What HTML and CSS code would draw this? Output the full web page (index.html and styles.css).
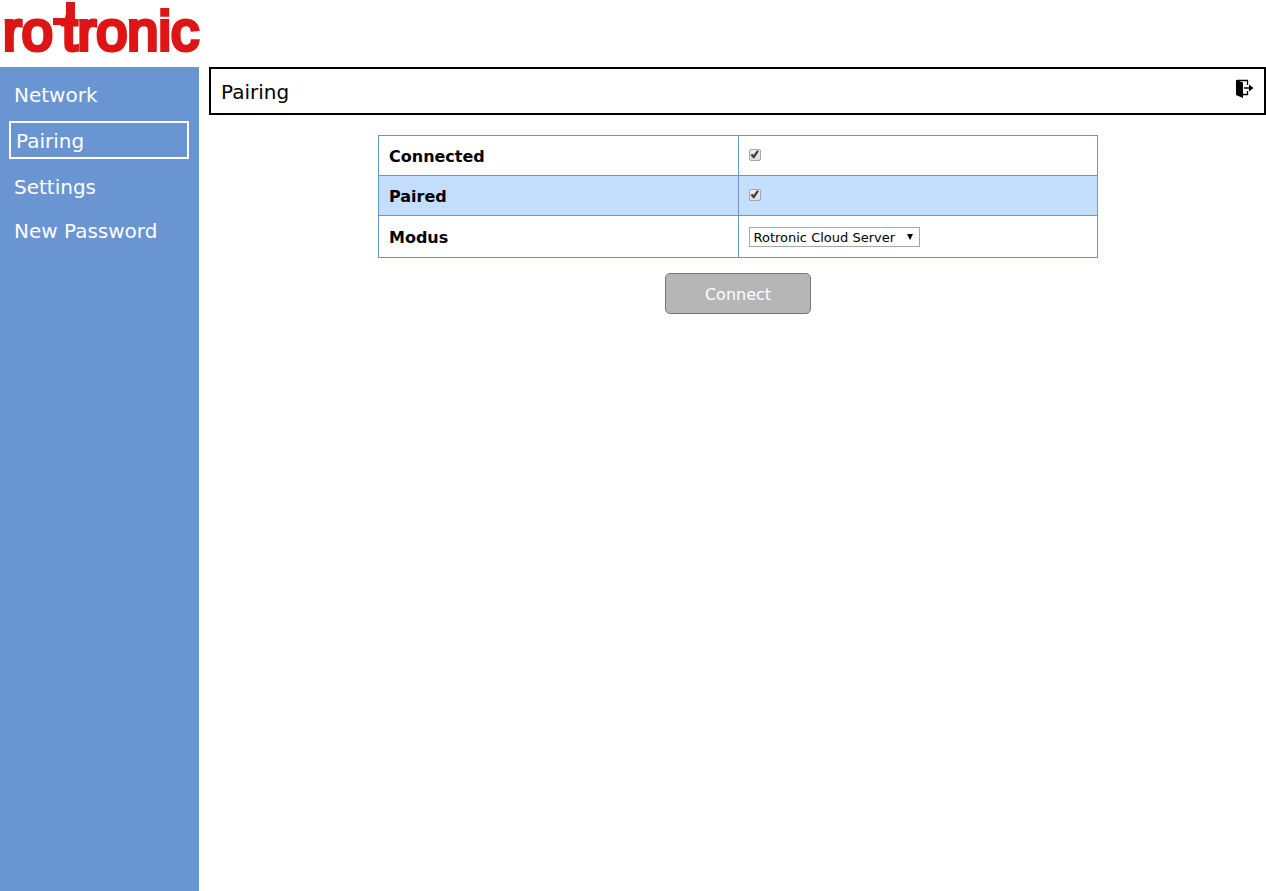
FILE: index.html
```html
<!DOCTYPE html>
<html lang="en">
  <head>
    <meta charset="UTF-8" />
    <meta name="viewport" content="width=device-width, initial-scale=1.0" />
    <title>Pairing</title>
    <link rel="stylesheet" href="styles.css">
  </head>
  <body>
    <header class="header">
      <svg class="logo" width="203" height="67" viewBox="0 0 203 67" role="img" aria-label="rotronic">
        <text x="3" y="50">ro</text>
        <text x="62" y="50">tronic</text>
        <!-- bar that joins the two halves -->
        <rect x="53" y="18" width="22" height="7" />
        <rect x="66" y="2" width="9" height="20" />
      </svg>
    </header>

    <div class="page">
      <nav class="menu">
        <a href="#network">Network</a>
        <a href="#pairing" class="active">Pairing</a>
        <a href="#settings">Settings</a>
        <a href="#password">New Password</a>
      </nav>

      <main class="content">
        <div class="title-bar">
          <h1>Pairing</h1>
          <button type="button" class="logout" aria-label="Logout">
            <svg width="20" height="20" viewBox="0 0 20 20">
              <path d="M2 1 L9 3.5 V19 L2 16 Z" />
              <path d="M3 1.5 H13.5 V6 M13.5 12 V15.5 H9" fill="none" stroke="#000" stroke-width="1.3" />
              <path d="M10 8.2 H15 V5.5 L19.5 9 L15 12.5 V9.8 H10 Z" />
            </svg>
          </button>
        </div>

        <form class="pairing-form">
          <table class="settings">
            <tr>
              <th scope="row"><label for="connected">Connected</label></th>
              <td><input type="checkbox" id="connected" checked></td>
            </tr>
            <tr>
              <th scope="row"><label for="paired">Paired</label></th>
              <td><input type="checkbox" id="paired" checked></td>
            </tr>
            <tr>
              <th scope="row"><label for="modus">Modus</label></th>
              <td>
                <div class="select">
                  <select id="modus">
                    <option>Rotronic Cloud Server</option>
                  </select>
                </div>
              </td>
            </tr>
          </table>
          <button type="button" class="connect">Connect</button>
        </form>
      </main>
    </div>
  </body>
</html>
```
FILE: styles.css
```css
* {
  box-sizing: border-box;
}
body {
  margin: 0;
  min-height: 100vh;
  display: flex;
  flex-direction: column;
  font-family: Verdana, "DejaVu Sans", sans-serif;
  font-size: 16px;
  color: black;
  background-color: white;
}
.header {
  height: 67px;
}
.logo {
  display: block;
  overflow: visible;
  fill: #dd1515;
}
.logo text {
  font-family: "Liberation Sans", Arial, sans-serif;
  font-size: 56px;
  stroke: #dd1515;
  stroke-width: 4px;
}
.page {
  flex: 1;
  display: flex;
  gap: 10px;
}

/* Menu */
.menu {
  width: 199px;
  flex-shrink: 0;
  padding: 10px 10px 10px 9px;
  display: flex;
  flex-direction: column;
  gap: 10px;
  background-color: #6995d3;
}
.menu a {
  padding: 6px 5px 4px;
  font-size: 20px;
  line-height: 24px;
  color: white;
  text-decoration: none;
}
.menu .active {
  border: 2px solid white;
}

/* Content */
.content {
  flex: 1;
}
.title-bar {
  display: flex;
  align-items: center;
  justify-content: space-between;
  height: 48px;
  padding: 2px 10px 0;
  border: 2px solid black;
}
.title-bar h1 {
  margin: 0;
  font-size: 20px;
  font-weight: normal;
}
.logout {
  padding: 0 0 6px;
  border: none;
  background: none;
  cursor: pointer;
}
.logout svg {
  display: block;
}
.pairing-form {
  padding-left: 1px;
}
.settings {
  width: 100%;
  max-width: 720px;
  margin: 20px auto 15px;
  border-collapse: collapse;
  table-layout: fixed;
}
.settings th,
.settings td {
  height: 40px;
  padding: 10px;
  border: 1px solid #6995d3;
  line-height: 19px;
  text-align: left;
}
.settings th {
  padding: 11px 10px 9px;
}
.settings tr:nth-child(even) {
  background-color: #c4deff;
}
.settings input {
  appearance: none;
  display: block;
  width: 12px;
  height: 12px;
  margin: 0 0 2px;
  border: 1px solid #a6a6a6;
  border-radius: 2px;
  background: linear-gradient(#eeeeee, #dddddd);
}
.settings input:checked::before {
  content: "";
  display: block;
  width: 10px;
  height: 10px;
  background-color: #404040;
  clip-path: polygon(10% 55%, 28% 42%, 42% 56%, 75% 8%, 95% 18%, 48% 88%, 36% 88%);
}
.select {
  display: grid;
  align-items: center;
  width: 171px;
  padding-top: 1px;
}
.select select {
  grid-area: 1 / 1;
  appearance: none;
  height: 20px;
  padding: 0 4px;
  border: 1px solid #a6a6a6;
  border-radius: 0;
  background-color: white;
  font-family: inherit;
  font-size: 13px;
  color: black;
}
.select::after {
  content: "";
  grid-area: 1 / 1;
  justify-self: end;
  margin-right: 7px;
  border: solid transparent;
  border-width: 6px 3px 0;
  border-top-color: black;
  pointer-events: none;
  z-index: 1;
}
.connect {
  display: block;
  height: 41px;
  margin: 0 auto;
  padding: 2px 39px 0;
  border: 1px solid #777777;
  border-radius: 5px;
  background-color: #b6b6b6;
  font-family: inherit;
  font-size: 16px;
  color: white;
}
```
